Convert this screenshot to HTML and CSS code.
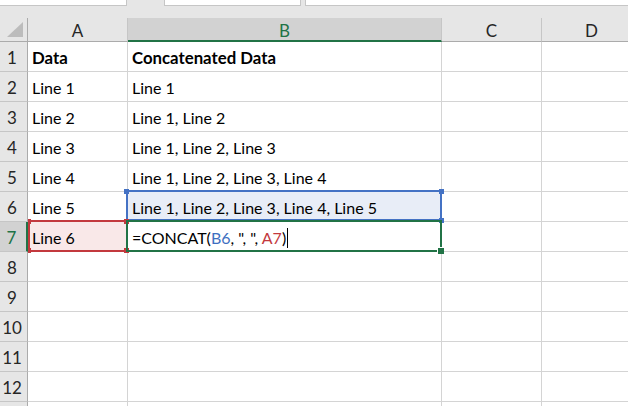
FILE: index.html
```html
<!DOCTYPE html>
<html lang="en">
<head>
<meta charset="utf-8">
<title>Sheet1</title>
<link rel="stylesheet" href="styles.css">
</head>
<body>
<div class="ribbon">
  <div class="box box-name"></div>
  <div class="box box-fx"></div>
  <div class="box box-formula"></div>
</div>
<div class="sheet">
  <!-- column headers -->
  <div class="corner"><svg width="17" height="16" viewBox="0 0 17 16"><polygon points="0,15 16,15 16,0" fill="#bcbcbc"/></svg></div>
  <div class="ch">A</div>
  <div class="ch ch-active">B</div>
  <div class="ch">C</div>
  <div class="ch">D</div>

  <div class="rh">1</div><div class="c bold">Data</div><div class="c bold">Concatenated Data</div><div class="c"></div><div class="c"></div>
  <div class="rh">2</div><div class="c">Line 1</div><div class="c">Line 1</div><div class="c"></div><div class="c"></div>
  <div class="rh">3</div><div class="c">Line 2</div><div class="c">Line 1, Line 2</div><div class="c"></div><div class="c"></div>
  <div class="rh">4</div><div class="c">Line 3</div><div class="c">Line 1, Line 2, Line 3</div><div class="c"></div><div class="c"></div>
  <div class="rh">5</div><div class="c">Line 4</div><div class="c">Line 1, Line 2, Line 3, Line 4</div><div class="c"></div><div class="c"></div>
  <div class="rh">6</div><div class="c">Line 5</div>
  <div class="c ref ref-blue">Line 1, Line 2, Line 3, Line 4, Line 5
    <span class="h h-tl"></span><span class="h h-tr"></span><span class="h h-br"></span>
  </div>
  <div class="c"></div><div class="c"></div>
  <div class="rh rh-active">7</div>
  <div class="c ref ref-red">Line 6
    <span class="h h-tl"></span><span class="h h-tr"></span><span class="h h-bl"></span><span class="h h-br"></span>
  </div>
  <div class="c ref ref-edit"><span class="formula">=CONCAT(<span class="tok-blue">B6</span>, ", ", <span class="tok-red">A7</span>)</span><span class="caret"></span>
    <span class="h h-fill"></span>
  </div>
  <div class="c"></div><div class="c"></div>
  <div class="rh">8</div><div class="c"></div><div class="c"></div><div class="c"></div><div class="c"></div>
  <div class="rh">9</div><div class="c"></div><div class="c"></div><div class="c"></div><div class="c"></div>
  <div class="rh">10</div><div class="c"></div><div class="c"></div><div class="c"></div><div class="c"></div>
  <div class="rh">11</div><div class="c"></div><div class="c"></div><div class="c"></div><div class="c"></div>
  <div class="rh">12</div><div class="c"></div><div class="c"></div><div class="c"></div><div class="c"></div>
  <div class="rh"></div><div class="c"></div><div class="c"></div><div class="c"></div><div class="c"></div>
</div>
</body>
</html>
```
FILE: styles.css
```css
html, body {
  margin: 0;
  padding: 0;
  width: 628px;
  height: 406px;
  overflow: hidden;
  background: #ffffff;
  font-family: Lato, "Liberation Sans", sans-serif;
}

/* strip under the formula bar */
.ribbon {
  height: 18px;
  background: #e6e6e6;
  display: flex;
  align-items: flex-start;
}
.box {
  height: 6px;
  background: #ffffff;
  border: 1px solid #c6c6c6;
  border-top: none;
  box-sizing: border-box;
}
.box-name { width: 127px; border-left: none; }
.box-fx { width: 137px; margin-left: 37px; }
.box-formula { flex: 1; margin-left: 4px; border-right: none; }

/* grid */
.sheet {
  display: grid;
  grid-template-columns: 28px 100px 314px 100px 100px;
  grid-template-rows: 24px repeat(13, 30px);
  font-size: 16px;
  color: #000;
}
.sheet > div {
  box-sizing: border-box;
  min-width: 0;
}

.corner {
  background: #e6e6e6;
  border-right: 1px solid #ababab;
  border-bottom: 1px solid #ababab;
  display: flex;
  align-items: flex-end;
  justify-content: flex-end;
  padding: 0 3px 3px 0;
}
.corner svg { display: block; }

.ch {
  background: #e6e6e6;
  border-right: 1px solid #c6c6c6;
  border-bottom: 1px solid #ababab;
  display: flex;
  align-items: center;
  justify-content: center;
  font-size: 17px;
  color: #262626;
  padding-top: 2px;
}
.ch-active {
  background: #d2d2d2;
  color: #217346;
  border-bottom: 2px solid #217346;
}

.rh {
  background: #e6e6e6;
  border-right: 1px solid #ababab;
  border-bottom: 1px solid #c6c6c6;
  display: flex;
  align-items: flex-end;
  justify-content: center;
  padding: 0 3px 3px 0;
  line-height: 20px;
  font-size: 17px;
  color: #262626;
}
.rh-active {
  background: #d2d2d2;
  color: #217346;
  border-right: 2px solid #217346;
}

.c {
  position: relative;
  border-right: 1px solid #d4d4d4;
  border-bottom: 1px solid #d4d4d4;
  display: flex;
  align-items: flex-end;
  padding: 0 4px 3px;
  line-height: 20px;
  white-space: nowrap;
}
.bold { font-weight: 700; font-size: 16.8px; }

/* reference frames drawn over the grid lines */
.ref::after {
  content: "";
  position: absolute;
  top: -2px;
  left: -2px;
  right: -1px;
  bottom: -1px;
  border: 2px solid currentColor;
  pointer-events: none;
}
.ref-blue {
  background: #e8edf7;
  z-index: 1;
}
.ref-blue::after { border-color: #4472c4; bottom: 0; }
.ref-red {
  background: #f9e8e8;
  z-index: 2;
}
.ref-red::after { border-color: #c3393e; left: 0; }
.ref-edit { z-index: 3; }
.ref-edit::after { border-color: #217346; }

.h {
  position: absolute;
  width: 5px;
  height: 5px;
  z-index: 2;
}
.ref-blue .h { background: #4472c4; }
.ref-red .h { background: #c3393e; }
.h-tl { left: -4px; top: -3px; }
.h-tr { right: -3px; top: -3px; }
.h-br { right: -3px; bottom: -2px; }
.h-bl { left: -4px; bottom: -2px; }
.ref-red .h-tl, .ref-red .h-bl { left: 0; width: 3px; }
.ref-red .h-tr, .ref-red .h-br { right: -2px; }
.h-fill {
  right: -3px;
  bottom: -3px;
  width: 6px;
  height: 6px;
  background: #217346;
  box-shadow: -1px -1px 0 #ffffff;
}

.formula { color: #000; }
.tok-blue { color: #3e6fc1; }
.tok-red { color: #c3393e; }
.caret {
  display: inline-block;
  width: 1px;
  height: 20px;
  background: #000;
  margin-left: 1px;
  align-self: flex-end;
}
```
